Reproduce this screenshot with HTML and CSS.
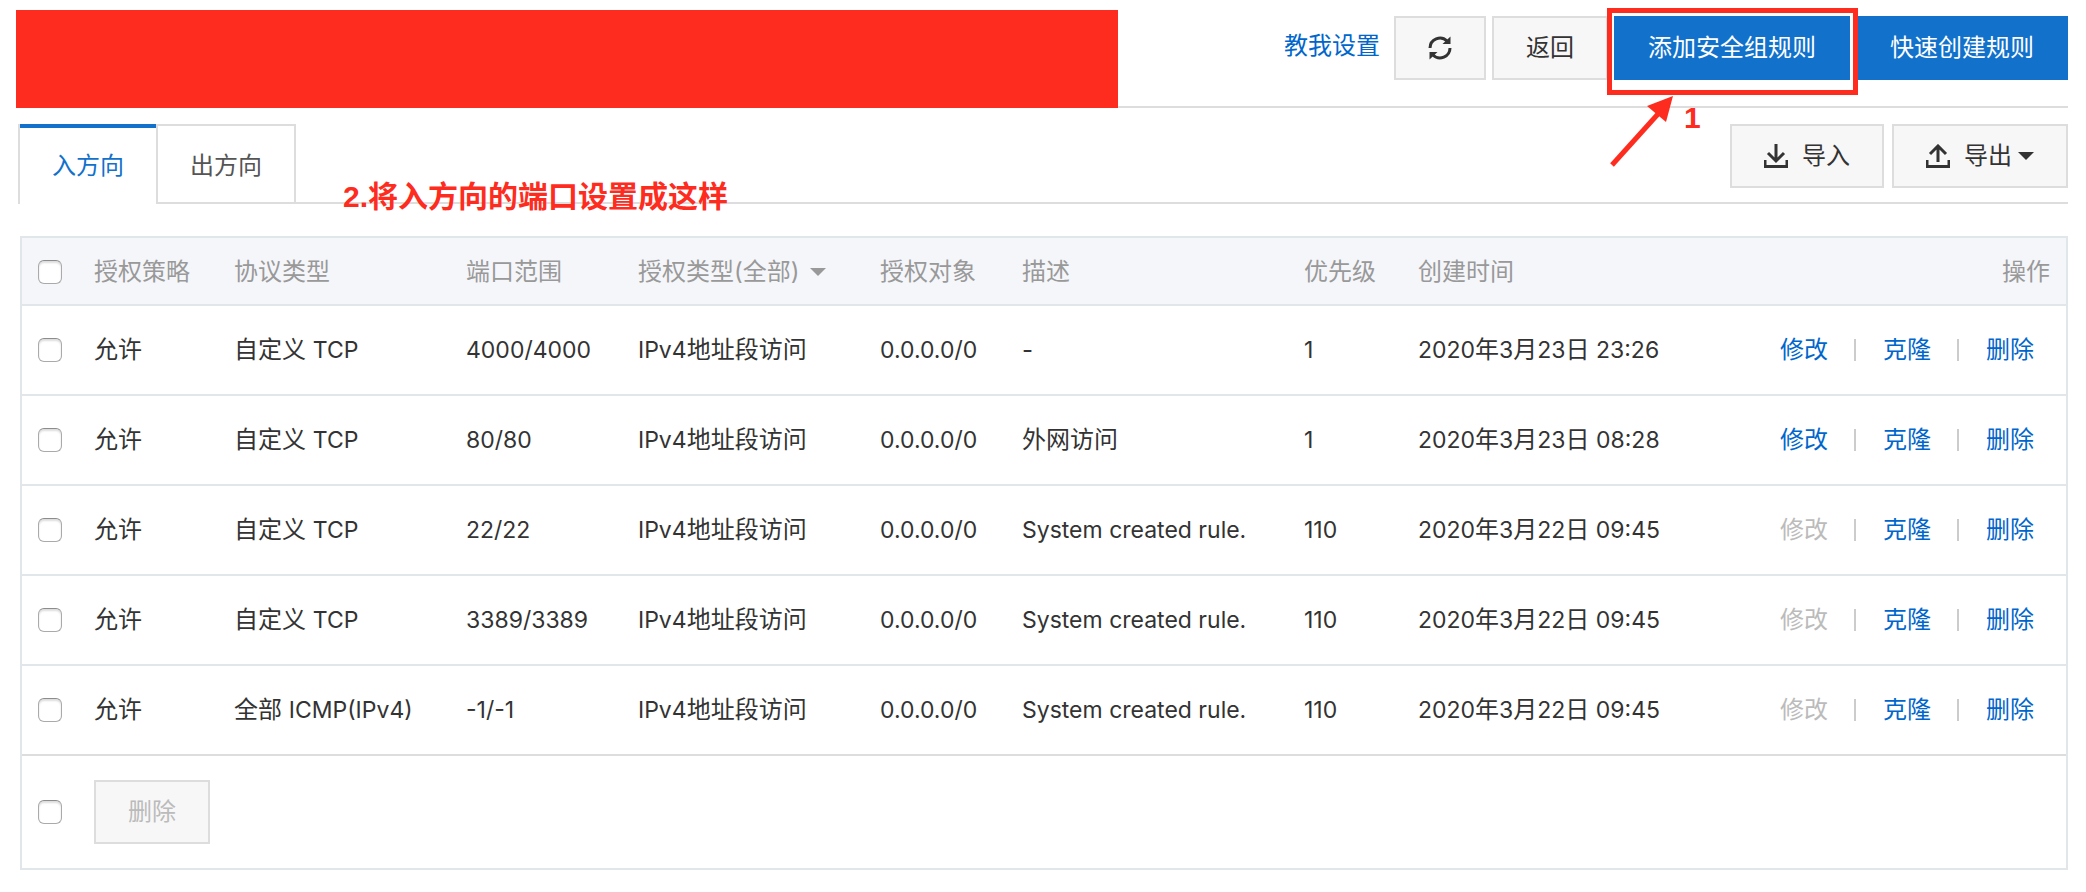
FILE: index.html
```html
<!DOCTYPE html>
<html lang="zh-CN">
<head>
<meta charset="utf-8">
<meta name="viewport" content="width=device-width, initial-scale=1">
<title>安全组规则</title>
<link rel="stylesheet" href="styles.css">
</head>
<body>
<main class="page">
  <header class="header">
    <div class="redaction"></div>
    <div class="header-actions">
      <a class="help-link" href="#">教我设置</a>
      <button class="btn" type="button" aria-label="刷新">
        <svg class="icon" viewBox="0 0 24 24" aria-hidden="true">
          <path d="M2 12A10 10 0 0 1 19 5" fill="none" stroke="#333" stroke-width="3"/>
          <path d="M22.500 .5V8H14.500Z" fill="#333"/>
          <path d="M22 12A10 10 0 0 1 5 19" fill="none" stroke="#333" stroke-width="3"/>
          <path d="M1.500 23.500V16H9.500Z" fill="#333"/>
        </svg>
      </button>
      <button class="btn" type="button">返回</button>
      <div class="marked">
        <button class="btn btn-primary" type="button">添加安全组规则</button>
        <div class="mark-box"></div>
        <svg class="mark-arrow" viewBox="0 0 66 72" aria-hidden="true">
          <path d="M4 69L50 18" stroke="#fe2c1f" stroke-width="5"/>
          <path d="M65 0L39 10L58 26Z" fill="#fe2c1f"/>
        </svg>
        <span class="mark-text mark-number">1</span>
      </div>
      <button class="btn btn-primary" type="button">快速创建规则</button>
    </div>
  </header>

  <div class="tabbar">
    <div class="tabs" role="tablist">
      <button class="tab tab-active" type="button" role="tab" aria-selected="true">入方向</button>
      <button class="tab" type="button" role="tab" aria-selected="false">出方向</button>
    </div>
    <span class="mark-text mark-note">2.将入方向的端口设置成这样</span>
    <div class="tab-actions">
      <button class="btn btn-icon" type="button">
        <svg class="icon" viewBox="0 0 24 24" aria-hidden="true">
          <path d="M12 0V16M4 9L12 17L20 9M1 16V22.500H23V16" fill="none" stroke="#333" stroke-width="3"/>
        </svg>
        导入
      </button>
      <button class="btn btn-icon" type="button">
        <svg class="icon" viewBox="0 0 24 24" aria-hidden="true">
          <path d="M12 18V2M4 10L12 2L20 10M1 16V22.500H23V16" fill="none" stroke="#333" stroke-width="3"/>
        </svg>
        <span class="caret-label">导出<span class="caret"></span></span>
      </button>
    </div>
  </div>

  <table class="rules">
    <colgroup>
      <col class="c-check"><col class="c-policy"><col class="c-protocol"><col class="c-port"><col class="c-type">
      <col class="c-object"><col class="c-desc"><col class="c-priority"><col class="c-time"><col>
    </colgroup>
    <thead>
      <tr>
        <th><input class="check" type="checkbox" aria-label="全选"></th>
        <th>授权策略</th><th>协议类型</th><th>端口范围</th>
        <th><button class="filter" type="button">授权类型(全部)<span class="caret"></span></button></th>
        <th>授权对象</th><th>描述</th><th>优先级</th><th>创建时间</th><th class="ops-head">操作</th>
      </tr>
    </thead>
    <tbody>
      <tr>
        <td><input class="check" type="checkbox" aria-label="选择规则 4000/4000"></td>
        <td>允许</td>
        <td>自定义 <span class="latin">TCP</span></td>
        <td><span class="latin">4000/4000</span></td>
        <td><span class="latin">IPv4</span>地址段访问</td>
        <td><span class="latin">0.0.0.0/0</span></td>
        <td>-</td>
        <td><span class="latin">1</span></td>
        <td><span class="latin">2020</span>年<span class="latin">3</span>月<span class="latin">23</span>日<span class="latin"> 23:26</span></td>
        <td><div class="ops"><a href="#">修改</a><a href="#">克隆</a><a href="#">删除</a></div></td>
      </tr>
      <tr>
        <td><input class="check" type="checkbox" aria-label="选择规则 80/80"></td>
        <td>允许</td>
        <td>自定义 <span class="latin">TCP</span></td>
        <td><span class="latin">80/80</span></td>
        <td><span class="latin">IPv4</span>地址段访问</td>
        <td><span class="latin">0.0.0.0/0</span></td>
        <td>外网访问</td>
        <td><span class="latin">1</span></td>
        <td><span class="latin">2020</span>年<span class="latin">3</span>月<span class="latin">23</span>日<span class="latin"> 08:28</span></td>
        <td><div class="ops"><a href="#">修改</a><a href="#">克隆</a><a href="#">删除</a></div></td>
      </tr>
      <tr>
        <td><input class="check" type="checkbox" aria-label="选择规则 22/22"></td>
        <td>允许</td>
        <td>自定义 <span class="latin">TCP</span></td>
        <td><span class="latin">22/22</span></td>
        <td><span class="latin">IPv4</span>地址段访问</td>
        <td><span class="latin">0.0.0.0/0</span></td>
        <td><span class="latin">System created rule.</span></td>
        <td><span class="latin">110</span></td>
        <td><span class="latin">2020</span>年<span class="latin">3</span>月<span class="latin">22</span>日<span class="latin"> 09:45</span></td>
        <td><div class="ops"><a class="disabled" aria-disabled="true">修改</a><a href="#">克隆</a><a href="#">删除</a></div></td>
      </tr>
      <tr>
        <td><input class="check" type="checkbox" aria-label="选择规则 3389/3389"></td>
        <td>允许</td>
        <td>自定义 <span class="latin">TCP</span></td>
        <td><span class="latin">3389/3389</span></td>
        <td><span class="latin">IPv4</span>地址段访问</td>
        <td><span class="latin">0.0.0.0/0</span></td>
        <td><span class="latin">System created rule.</span></td>
        <td><span class="latin">110</span></td>
        <td><span class="latin">2020</span>年<span class="latin">3</span>月<span class="latin">22</span>日<span class="latin"> 09:45</span></td>
        <td><div class="ops"><a class="disabled" aria-disabled="true">修改</a><a href="#">克隆</a><a href="#">删除</a></div></td>
      </tr>
      <tr>
        <td><input class="check" type="checkbox" aria-label="选择规则 -1/-1"></td>
        <td>允许</td>
        <td>全部 <span class="latin">ICMP(IPv4)</span></td>
        <td><span class="latin">-1/-1</span></td>
        <td><span class="latin">IPv4</span>地址段访问</td>
        <td><span class="latin">0.0.0.0/0</span></td>
        <td><span class="latin">System created rule.</span></td>
        <td><span class="latin">110</span></td>
        <td><span class="latin">2020</span>年<span class="latin">3</span>月<span class="latin">22</span>日<span class="latin"> 09:45</span></td>
        <td><div class="ops"><a class="disabled" aria-disabled="true">修改</a><a href="#">克隆</a><a href="#">删除</a></div></td>
      </tr>
    </tbody>
    <tfoot>
      <tr>
        <td><input class="check" type="checkbox" aria-label="全选"></td>
        <td colspan="9"><button class="btn" type="button" disabled>删除</button></td>
      </tr>
    </tfoot>
  </table>
</main>
</body>
</html>
```
FILE: styles.css
```css
* {
  box-sizing: border-box;
}

body {
  margin: 0;
  background: #fff;
  color: #333;
  font: 24px/32px Inter, "Noto Sans CJK SC", sans-serif;
}

button {
  font: inherit;
  color: inherit;
  white-space: nowrap;
}

a {
  color: #06c;
  text-decoration: none;
}

/* Latin runs sit slightly smaller beside the Chinese text */
.latin {
  font-size: 23px;
}

.page {
  padding: 10px 18px 20px 16px;
}

/* Header */
.header {
  display: flex;
  justify-content: space-between;
  align-items: flex-start;
  border-bottom: 2px solid #ddd;
}

.redaction {
  flex: 0 1 1102px;
  height: 98px;
  margin-bottom: -2px;
  background: #fe2c1f;
}

.header-actions {
  display: flex;
  align-items: center;
  gap: 6px;
  padding-top: 6px;
}

.help-link {
  margin-right: 8px;
  padding-bottom: 4px;
  white-space: nowrap;
}

.btn {
  display: flex;
  align-items: center;
  height: 64px;
  padding: 0 32px;
  border: 2px solid #ddd;
  background: #f7f7f7;
}

.btn:disabled {
  color: #bbb;
}

.btn-primary {
  border-color: #1171cb;
  background: #1171cb;
  color: #fff;
}

.btn-icon {
  gap: 14px;
}

.icon {
  width: 24px;
  height: 24px;
}

.caret {
  border: 8px solid transparent;
  border-top-color: currentColor;
  border-bottom: 0;
}

.caret-label {
  display: flex;
  align-items: center;
  gap: 6px;
}

/* Annotations */
.marked {
  position: relative;
}

.mark-box {
  position: absolute;
  inset: -8px -8px -15px -7px;
  border: 5px solid #fe2c1f;
  pointer-events: none;
}

.mark-arrow {
  position: absolute;
  top: 80px;
  left: -6px;
  width: 66px;
  height: 72px;
}

.mark-text {
  position: absolute;
  color: #fe2c1f;
  font: bold 30px/36px "Liberation Sans", "Noto Sans CJK SC", sans-serif;
  white-space: nowrap;
}

.mark-number {
  top: 84px;
  left: 70px;
}

.mark-note {
  top: 55px;
  left: 325px;
}

/* Tabs */
.tabbar {
  position: relative;
  display: flex;
  justify-content: space-between;
  align-items: flex-start;
  margin: 16px 0 32px 2px;
  border-bottom: 2px solid #ddd;
}

.tabs {
  display: flex;
  margin-bottom: -2px;
}

.tab {
  height: 80px;
  padding: 4px 32px 0;
  border: 2px solid #ddd;
  background: #fff;
  color: #555;
}

.tab-active {
  border-width: 0 0 0 2px;
  box-shadow: inset 0 4px #1171cb;
  color: #1171cb;
}

.tab-actions {
  display: flex;
  gap: 8px;
}

/* Rules table */
.rules {
  width: calc(100% - 4px);
  margin-left: 4px;
  border: 2px solid #e1e6eb;
  border-spacing: 0;
  table-layout: fixed;
}

.c-check { width: 56px; }
.c-policy { width: 140px; }
.c-protocol { width: 232px; }
.c-port { width: 172px; }
.c-type { width: 242px; }
.c-object { width: 142px; }
.c-desc { width: 282px; }
.c-priority { width: 114px; }
.c-time { width: 320px; }

.rules th,
.rules td {
  height: 90px;
  padding: 0 0 0 16px;
  border-bottom: 2px solid #e1e6eb;
  text-align: left;
  white-space: nowrap;
}

.rules th {
  height: 68px;
  padding-top: 2px;
  background: #f5f6fa;
  color: #999;
  font-weight: 400;
}

.rules tbody tr:last-child td {
  border-bottom-color: #ddd;
}

.rules tfoot td {
  height: 112px;
  border-bottom: 0;
}

.rules .ops-head {
  padding-right: 16px;
  text-align: right;
}

.check {
  display: block;
  appearance: none;
  width: 24px;
  height: 24px;
  margin: 0;
  border: 1px solid #aaa;
  border-top-color: #8c8c8c;
  border-radius: 6px;
  background: #fff;
  box-shadow: inset 0 2px 2px #ddd;
}

.filter {
  display: flex;
  align-items: center;
  gap: 10px;
  padding: 0;
  border: 0;
  background: none;
}

.ops {
  display: flex;
  justify-content: flex-end;
  align-items: center;
  gap: 26px;
  padding-right: 32px;
}

.ops .disabled {
  color: #bbb;
}

.ops a + a {
  display: flex;
  align-items: center;
  gap: 27px;
}

.ops a + a::before {
  content: "";
  width: 2px;
  height: 22px;
  background: #ccc;
}
```
